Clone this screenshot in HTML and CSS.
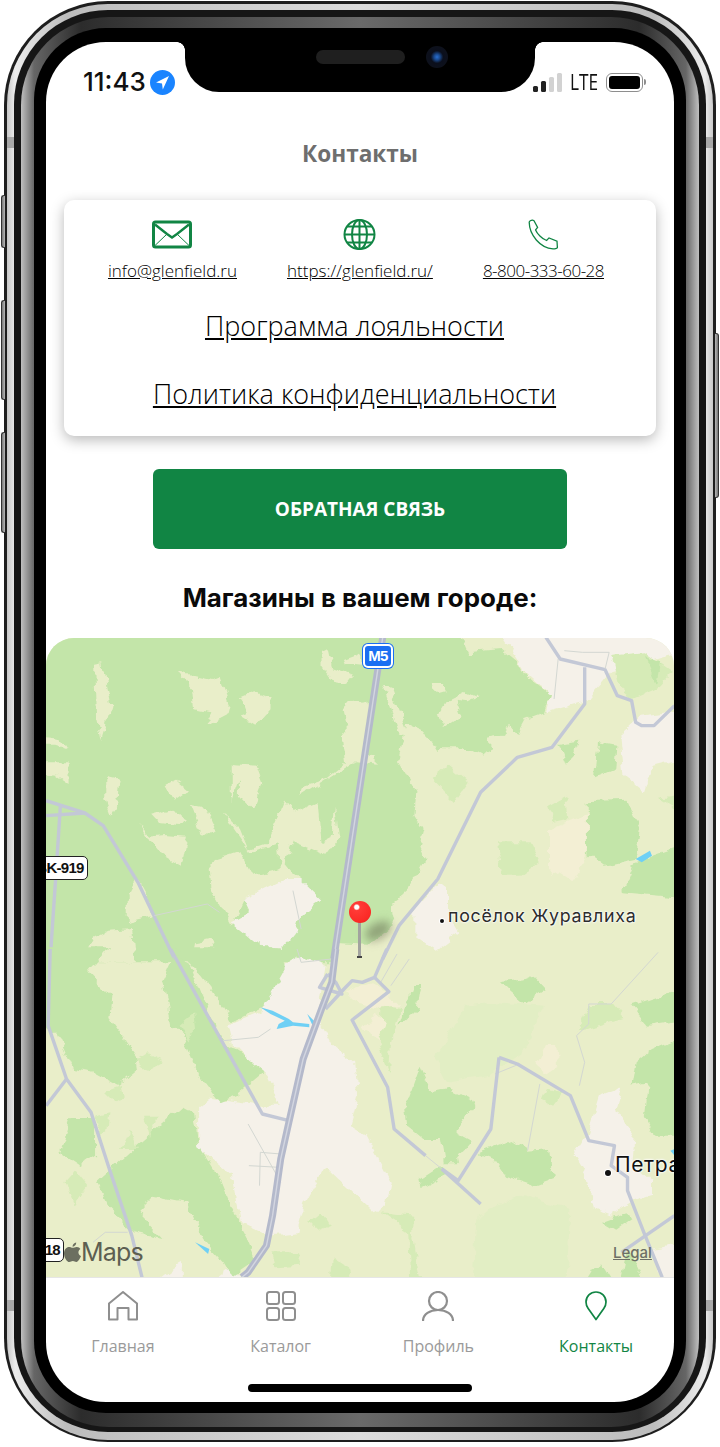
FILE: index.html
```html
<!DOCTYPE html>
<html lang="ru">
	<head>
		<meta charset="UTF-8" />
		<title>Контакты</title>
		<link rel="stylesheet" href="styles.css">
	</head>
	<body>
		<div class="device">
			<span class="side-btn side-btn-mute"></span>
			<span class="side-btn side-btn-up"></span>
			<span class="side-btn side-btn-down"></span>
			<span class="side-btn side-btn-power"></span>
			<span class="band band-lt"></span>
			<span class="band band-rt"></span>
			<span class="band band-lb"></span>
			<span class="band band-rb"></span>
			<div class="rim-edge"><div class="rim-silver"><div class="rim-dark"><div class="rim-steel"><div class="rim-black">
				<div class="screen">
					<div class="notch"><span class="speaker"></span><span class="camera"></span></div>

					<header class="status">
						<div class="status-left">
							<span class="clock">11:43</span>
							<svg class="loc" width="25" height="25" viewBox="0 0 25 25"><circle cx="12.5" cy="12.5" r="12.5" fill="#1a84ff"/><path d="M19 6 L6 12.6 L12 13.4 L12.8 19.4 Z" fill="#fff"/></svg>
						</div>
						<div class="status-right">
							<span class="signal"><i class="on s1"></i><i class="on s2"></i><i class="s3"></i><i class="s4"></i></span>
							<span class="lte">LTE</span>
							<span class="battery"><i></i></span>
						</div>
					</header>

					<h1 class="title">Контакты</h1>

					<section class="card">
						<div class="contacts">
							<a class="contact">
								<svg width="40" height="28" viewBox="0 0 40 28" fill="none" stroke="#118544"><rect x="1.5" y="1.5" width="37" height="25" rx="2" stroke-width="3"/><path d="M3 4 L15 13.5 L20 17 L25 13.5 L37 4" stroke-width="2.4"/><path d="M3 25 L15 13.5 M37 25 L25 13.5" stroke-width="1"/></svg>
								<span>info@glenfield.ru</span>
							</a>
							<a class="contact">
								<svg width="33" height="31" viewBox="0 0 33 31" fill="none" stroke="#118544" stroke-width="2"><ellipse cx="16.5" cy="15.5" rx="15" ry="14.5"/><ellipse cx="16.5" cy="15.5" rx="7.5" ry="14.5"/><path d="M16.5 1 V30 M1.5 15.5 H31.5 M4 7.5 H29 M4 23.5 H29"/></svg>
								<span>https://glenfield.ru/</span>
							</a>
							<a class="contact contact-phone">
								<svg width="30" height="30" viewBox="0 0 30 30" fill="none" stroke="#118544" stroke-width="1.3"><path d="M1.2 2.8 C1.2 1.6 3 .6 4.6 .7 L6 1.2 L9.6 8 L7.6 10.4 C9 14 14 19.4 18.6 21 L21 18.4 L29 21.6 L29.4 28 C29 29 26.4 29.6 25 29.4 C12 28.4 1.4 15.4 1.2 2.8 Z"/></svg>
								<span>8-800-333-60-28</span>
							</a>
						</div>
						<a class="big-link link-first">Программа лояльности</a>
						<a class="big-link link-second">Политика конфиденциальности</a>
					</section>

					<button class="feedback" type="button">ОБРАТНАЯ СВЯЗЬ</button>

					<h2 class="shops">Магазины в вашем городе:</h2>

					<div class="map">
						<svg class="map-art" width="628" height="639" viewBox="46 639 628 639">
							<defs>
								<filter id="rough" color-interpolation-filters="sRGB">
									<feTurbulence type="fractalNoise" baseFrequency=".03" numOctaves="3" seed="4" result="n"/>
									<feDisplacementMap in="SourceGraphic" in2="n" scale="26" xChannelSelector="R" yChannelSelector="G"/>
								</filter>
							</defs>
							<rect x="46" y="639" width="628" height="639" fill="#e9eec9"/>
							<g transform="translate(40 630) scale(.408 .3333)">
								<g filter="url(#rough)">
									<polygon class="urban" points="1120,0 1600,0 1600,60 1400,130 1340,215 1240,250 1250,195 1190,130"/>
									<polygon class="forest" points="-20,0 1025,0 1050,70 1130,60 1170,100 1200,150 1250,195 1235,250 1190,270 1170,315 1150,285 1135,320 1090,330 1115,360 1080,380 1040,355 985,355 975,370 945,310 900,285 880,400 925,490 920,560 940,600 930,650 945,690 900,790 860,830 870,880 800,950 730,945 720,1000 -20,1000"/>
									<g class="pale">
										<polygon points="135,105 155,100 165,170 175,230 150,330 140,270"/>
										<polygon points="340,130 420,150 440,140 465,230 460,255 405,290 420,250 380,240 375,180"/>
										<polygon points="490,205 520,190 565,205 565,240 530,290 490,260 515,250"/>
										<polygon points="690,70 705,60 715,115 750,130 770,140 755,165 715,155 690,110"/>
										<polygon points="745,90 790,70 790,110 750,105"/>
										<polygon points="840,170 860,180 905,320 880,320"/>
										<polygon points="955,165 985,165 995,190 980,195"/>
										<polygon points="1000,210 1040,185 1075,205 1050,220 1020,215 1035,260 985,300 975,260"/>
										<polygon points="745,225 800,215 810,300 800,375 825,380 825,410 770,400 640,500 650,470 700,450 750,400 740,300 755,290"/>
										<polygon points="470,405 530,410 545,460 520,540 490,500 490,450 470,520"/>
										<polygon points="160,440 195,450 190,510 200,520 175,560 160,510"/>
										<polygon points="310,470 335,455 365,485 330,515"/>
										<polygon points="-20,320 50,330 65,360 40,350 -20,350"/>
										<polygon points="-20,400 70,400 70,465 40,440 -20,430"/>
										<polygon points="275,560 320,545 355,570 345,585 290,580"/>
										<polygon points="370,530 410,540 430,595 400,620"/>
										<polygon points="245,585 270,620 310,615 360,620 345,710 290,670 270,640"/>
										<polygon points="450,550 490,600 510,660 560,640 600,520 620,550 680,520 690,640 720,620 725,530 735,620 700,680 620,640 600,700 620,730 640,750 500,810 470,890 420,780 415,700 490,670 520,740 590,720 585,640 515,670 470,590"/>
										<polygon points="130,930 170,905 225,900 235,1000 100,1000"/>
										<polygon points="380,940 420,930 440,1000 370,1000"/>
										<polygon points="215,790 235,745 260,800 280,860 215,880"/>
									</g>
									<polygon class="urban" points="500,810 600,750 640,750 690,810 640,860 630,900 590,960 540,950 470,880 515,850"/>
									<polygon class="urban" points="1420,320 1470,260 1600,240 1600,380 1500,410 1480,490 1430,440"/>
									<polygon class="urban" points="920,840 980,760 1000,780 1000,850 1030,910 970,965 920,920"/>
									<polygon class="meadow" points="1400,80 1480,70 1550,130 1520,170 1450,210 1420,180"/>
									<polygon class="forest" points="1480,80 1520,100 1510,165"/>
									<polygon class="forest" points="1340,520 1440,515 1470,600 1460,690 1385,710 1340,670"/>
									<polygon class="forest" points="1270,345 1320,335 1290,410"/>
									<polygon class="forest" points="1370,340 1415,350 1410,420 1360,445"/>
									<polygon class="forest" points="1460,700 1600,640 1600,810 1430,790"/>
									<polygon class="meadow" points="1120,640 1200,640 1225,700 1180,740 1130,740"/>
									<polygon class="meadow" points="960,450 1000,410 1050,460 1015,520"/>
									<polygon class="meadow" points="1245,530 1290,500 1295,570 1260,580"/>
									<polygon class="meadow" points="1520,510 1600,490 1600,570"/>
									<polygon class="sand" points="1250,600 1340,555 1340,690 1300,760 1250,720"/>
								</g>
								<polygon class="water" points="1460,690 1495,665 1500,680 1475,700"/>
								<polyline class="road" points="1240,25 1275,90 1385,122 1415,200 1450,215 1460,280 1475,290 1505,290 1555,230"/>
								<polyline class="road" points="840,990 880,890 975,750 1080,490 1170,385 1255,355 1335,225 1335,115"/>
								<polyline class="road" points="50,530 40,720 25,990"/>
								<polyline class="road" points="15,515 110,552 155,590 240,760 330,990"/>
								<polyline class="road" points="15,560 110,552"/>
								<polyline class="road-thin" points="1270,90 1260,210"/>
								<polyline class="road-thin" points="1285,65 1330,70 1395,70 1385,120"/>
								<polyline class="road-thin" points="280,860 410,825 440,850"/>
								<polyline class="road-thin" points="620,785 640,900"/>
								<polyline class="road-main" points="840,25 720,990"/>
								<polyline class="road-core" points="840,25 720,990"/>
							</g>
							<g transform="translate(40 950) scale(.408 .3333)">
								<g filter="url(#rough)">
									<g class="urban">
										<polygon points="460,230 540,190 590,60 640,20 700,50 680,200 720,290 770,340 780,440 760,530 800,560 860,700 850,770 820,790 760,720 700,650 650,760 630,850 560,860 490,820 470,680 390,600 390,480 420,450 540,470 590,470 560,380 500,320 470,280"/>
										<polygon points="1310,620 1340,560 1370,440 1425,415 1410,480 1455,560 1450,640 1500,700 1500,740 1450,760 1400,800 1360,780 1340,680"/>
										<polygon points="1495,900 1600,880 1600,1000 1530,1000"/>
										<polygon points="280,1000 350,935 350,1000"/>
										<polygon points="420,1000 470,955 490,1000"/>
									</g>
									<polygon class="meadow-soft" points="970,330 1040,170 1120,160 1235,170 1190,300 1100,380 1000,400"/>
									<polygon class="meadow-soft" points="1060,1000 1070,800 1180,740 1300,780 1290,1000"/>
									<g class="forest">
										<polygon points="-20,-5 170,-5 120,70 175,140 170,210 235,320 240,360 190,410 130,370 80,360 40,250 -20,200"/>
										<polygon points="330,-5 590,-5 600,60 550,170 470,220 420,120 395,80"/>
										<polygon points="300,100 330,20 370,50 395,130 420,200 450,280 500,320 550,370 480,440 440,460 390,380 370,320 350,260 320,230"/>
										<polygon points="140,700 230,600 350,470 380,490 390,590 440,690 470,780 510,870 530,930 470,980 450,940 400,870 360,760 280,740 240,790 300,870 230,850 170,780"/>
										<polygon points="1125,100 1190,90 1210,80 1240,120 1185,165 1150,130"/>
										<polygon points="895,470 930,350 960,430 1000,420 1070,460 1040,510 1015,550 1060,580 1020,640 990,640 980,570 940,570 900,530"/>
										<polygon points="930,690 980,650 1000,680 935,720"/>
										<polygon points="1070,610 1150,570 1195,605 1250,600 1260,690 1215,710 1140,680 1110,630"/>
										<polygon points="1450,170 1600,110 1600,210 1490,230"/>
										<polygon points="1460,340 1500,300 1600,250 1600,560 1510,560 1480,500 1490,400 1450,410"/>
										<polygon points="880,230 915,105 935,105 925,180"/>
										<polygon points="1375,820 1440,790 1450,810 1410,845"/>
										<polygon points="50,610 75,510 135,510 135,620 100,650"/>
										<polygon points="1420,1000 1440,900 1480,1000"/>
										<polygon points="1340,1000 1370,940 1400,1000"/>
									</g>
									<g class="meadow">
										<polygon points="835,170 885,180 860,290 855,370 830,290"/>
										<polygon points="1240,420 1285,430 1260,470 1230,450"/>
										<polygon points="1315,250 1345,165 1400,165 1430,210 1350,240"/>
										<polygon points="135,500 170,490 165,550 150,560"/>
										<polygon points="195,600 220,540 240,600"/>
										<polygon points="255,500 290,500 270,570"/>
										<polygon points="155,430 200,410 205,440 180,460"/>
										<polygon points="235,330 260,310 305,340 265,365"/>
										<polygon points="60,700 85,665 115,710 80,770"/>
										<polygon points="570,910 630,910 640,950 580,955"/>
										<polygon points="660,820 690,790 710,830 680,845"/>
										<polygon points="835,790 920,800 915,870 935,1000 910,1000 905,850"/>
										<polygon points="710,1000 715,925 760,960 770,1000"/>
										<polygon points="340,230 380,190 385,240 360,275"/>
									</g>
									<g class="sand">
										<polygon points="1215,350 1240,285 1265,285 1270,350 1240,375"/>
										<polygon points="790,240 820,195 850,220 830,270"/>
										<polygon points="750,130 810,105 850,130 880,170 830,180 780,165"/>
									</g>
								</g>
								<g class="water">
									<polygon points="540,175 570,185 610,210 620,220 660,225 660,235 620,230 580,240 585,225 600,215 565,195"/>
									<polygon points="655,195 675,220 670,235"/>
									<polygon points="380,880 415,900 412,915"/>
									<polygon points="1545,605 1555,600 1555,620"/>
								</g>
								<polyline class="road-thin" points="630,0 640,40 715,30"/>
								<polyline class="road-thin" points="450,275 535,265 565,240"/>
								<polyline class="road-thin" points="510,525 590,700"/>
								<polyline class="road-thin" points="512,650 585,655"/>
								<polyline class="road-thin" points="538,710 540,610 590,615"/>
								<polyline class="road-thin" points="875,15 835,100"/>
								<polyline class="road-thin" points="905,30 860,110"/>
								<polyline class="road-thin" points="1515,10 1400,165 1345,165 1345,225 1315,260 1335,340 1322,410"/>
								<polyline class="road-thin" points="1225,405 1195,605"/>
								<polyline class="road-thin" points="1115,375 1175,345"/>
								<polyline class="road-thin" points="945,620 985,660"/>
								<polyline class="road-thin" points="130,880 160,850 215,850"/>
								<polyline class="road" points="25,0 20,230 65,390 125,490 170,660 225,860 250,985"/>
								<polyline class="road" points="65,390 15,470"/>
								<polyline class="road" points="320,0 545,495 610,515"/>
								<polyline class="road" points="850,0 820,85 790,100 765,95 745,120 700,180"/>
								<polyline class="road" points="705,75 685,115 740,135 725,100 705,75"/>
								<polyline class="road" points="820,85 855,128 765,213 852,415 868,540 945,620"/>
								<polyline class="road" points="985,660 1080,765"/>
								<polyline class="road" points="1125,325 1105,540 1025,695 985,660"/>
								<polyline class="road" points="1125,325 1170,345 1300,440 1345,575 1408,590 1400,650 1440,685 1440,725 1480,850 1525,985"/>
								<polyline class="road" points="1425,910 1555,800"/>
								<polyline class="road-main" points="725,0 715,100 690,180 645,330 610,520 590,630 570,800 555,890 510,970 495,985"/>
								<polyline class="road-core" points="725,0 715,100 690,180 645,330 610,520 590,630 570,800 555,890 510,970 495,985"/>
							</g>
						</svg>

						<span class="shield shield-blue">M5</span>
						<span class="shield shield-road">BK-919</span>
						<span class="shield shield-small">18</span>

						<span class="place-dot dot-zh"></span>
						<span class="place place-zh">посёлок Журавлиха</span>
						<span class="place-dot dot-pe"></span>
						<span class="place place-pe">Петра</span>

						<div class="pin">
							<span class="pin-shadow"></span>
							<span class="pin-needle"></span>
							<span class="pin-head"></span>
						</div>

						<div class="maps-logo">
							<svg width="17" height="21" viewBox="0 0 17 21"><path d="M12.2 0.5 C12.4 2.6 10.6 4.8 8.6 4.7 C8.3 2.7 10.2 .7 12.2 .5 Z M8.8 5.8 C9.8 5.8 11.2 4.8 12.9 4.9 C14.4 5 15.7 5.7 16.4 6.9 C13.4 8.7 14 12.9 17 14.1 C16.2 16.3 14.3 20 12.4 20 C11 20 10.4 19.1 8.9 19.1 C7.3 19.1 6.7 20 5.3 20 C3 20 0 15.4 0 11.4 C0 7.4 2.6 5 5 5 C6.5 5 7.8 5.8 8.8 5.8 Z" fill="#6c6f60"/></svg>
							<span>Maps</span>
						</div>
						<a class="legal">Legal</a>
					</div>

					<nav class="tabs">
						<a class="tab">
							<svg width="30" height="30" viewBox="0 0 30 30" fill="none" stroke="#8f8f8f" stroke-width="2"><path d="M1 12.5 L15 1 L29 12.5 V28.6 H20.5 V17 H9.5 V28.6 H1 Z" stroke-linejoin="round"/></svg>
							<span>Главная</span>
						</a>
						<a class="tab">
							<svg width="30" height="30" viewBox="0 0 30 30" fill="none" stroke="#8f8f8f" stroke-width="2"><rect x="1" y="1" width="12" height="12" rx="2.5"/><rect x="17" y="1" width="12" height="12" rx="2.5"/><rect x="1" y="17" width="12" height="12" rx="2.5"/><rect x="17" y="17" width="12" height="12" rx="2.5"/></svg>
							<span>Каталог</span>
						</a>
						<a class="tab">
							<svg width="32" height="30" viewBox="0 0 32 30" fill="none" stroke="#8f8f8f" stroke-width="2.2"><circle cx="16" cy="10" r="9"/><path d="M1 30 C1 23 8 19 16 19 C24 19 31 23 31 30"/></svg>
							<span>Профиль</span>
						</a>
						<a class="tab tab-active">
							<svg width="22" height="30" viewBox="0 0 22 30" fill="none" stroke="#118544" stroke-width="1.7"><path d="M11 28.6 L3.2 17.6 C1.8 15.6 1 13.6 1 11 C1 5.2 5.4 1 11 1 C16.6 1 21 5.2 21 11 C21 13.6 20.2 15.6 18.8 17.6 Z" stroke-linejoin="round"/></svg>
							<span>Контакты</span>
						</a>
					</nav>

					<span class="home-bar"></span>
				</div>
			</div></div></div></div></div>
		</div>
	</body>
</html>
```

FILE: styles.css
```css
body{
	margin:0;
	background-color:#fff;
	font-family:"Open Sans",sans-serif;
}
a{
	color:inherit;
}

/* phone body */
.device{
	position:relative;
	box-sizing:border-box;
	width:720px;
	height:1447px;
	padding:1px 4px 0;
}
.rim-edge{
	background-color:#1e1e1e;
	border-radius:104px;
	padding:3px 3px 2px;
}
.rim-silver{
	background:linear-gradient(90deg,#c8c8c8,#ececec 8px,#bdbdbd 60px,#dcdcdc 50%,#bdbdbd calc(100% - 60px),#ececec calc(100% - 8px),#c8c8c8);
	border-radius:101px;
	padding:6px 7px 8px;
}
.rim-dark{
	background-color:#161616;
	border-radius:94px;
	padding:7px 7px 5px;
}
.rim-steel{
	background:linear-gradient(90deg,#c0c0c0 0,#666 13px,#2c2c2c 60px,#6a6a6a 50%,#2c2c2c calc(100% - 60px),#666 calc(100% - 13px),#c0c0c0 100%);
	border-radius:88px;
	padding:11px 13px 14px;
}
.rim-black{
	background-color:#000;
	border-radius:72px;
	padding:14px 12px 11px;
}
.side-btn{
	position:absolute;
	width:4px;
	background:linear-gradient(90deg,#777,#b8b8b8);
	border:1px solid #333;
	border-right:0;
	border-radius:3px 0 0 3px;
	box-sizing:border-box;
}
.side-btn-mute{left:1px;top:195px;height:53px;}
.side-btn-up{left:1px;top:300px;height:100px;}
.side-btn-down{left:1px;top:432px;height:101px;}
.side-btn-power{right:1px;top:333px;height:165px;transform:scaleX(-1);}
.band{
	position:absolute;
	width:7px;
	height:11px;
	background-color:#a8a8a8;
}
.band-lt{left:7px;top:137px;}
.band-rt{right:7px;top:137px;}
.band-lb{left:7px;top:1300px;}
.band-rb{right:7px;top:1300px;}

/* screen */
.screen{
	position:relative;
	width:628px;
	height:1360px;
	background-color:#fff;
	border-radius:60px;
	overflow:hidden;
	display:flex;
	flex-direction:column;
	align-items:center;
}
.notch{
	position:absolute;
	top:0;
	left:139px;
	width:350px;
	height:50px;
	background-color:#000;
	border-radius:0 0 34px 34px;
}
.notch::before,.notch::after{
	content:"";
	position:absolute;
	top:0;
	width:8px;
	height:8px;
	background:radial-gradient(circle at 0 100%,transparent 7.5px,#000 8px);
}
.notch::before{left:-8px;}
.notch::after{right:-8px;transform:scaleX(-1);}
.speaker{
	position:absolute;
	left:131px;
	top:8px;
	width:89px;
	height:14px;
	border-radius:7px;
	background-color:#1f1f1f;
}
.camera{
	position:absolute;
	left:241px;
	top:4px;
	width:22px;
	height:22px;
	border-radius:50%;
	background:radial-gradient(circle,#2a6fd0 0,#1a4a90 18%,#0b0f1c 40%,#10131c 100%);
}

/* status bar */
.status{
	box-sizing:border-box;
	width:100%;
	height:80px;
	flex:none;
	padding:0 31px 0 37px;
	display:flex;
	justify-content:space-between;
	align-items:center;
}
.status-left{
	display:flex;
	align-items:center;
	gap:4px;
}
.clock{
	font:500 26px/30px Inter,sans-serif;
	color:#111;
}
.status-right{
	display:flex;
	align-items:center;
}
.signal{
	display:flex;
	align-items:flex-end;
	gap:3px;
	height:19px;
}
.signal i{
	width:5px;
	border-radius:1.5px;
	background-color:#d2d2d2;
}
.signal .on{background-color:#222;}
.s1{height:6px;}
.s2{height:11px;}
.s3{height:15px;}
.s4{height:19px;}
.lte{
	margin-left:8px;
	width:28px;
	font:400 21px/24px "Open Sans",sans-serif;
	color:#111;
	transform:scaleX(.82);
	transform-origin:0 50%;
}
.battery{
	position:relative;
	box-sizing:border-box;
	margin-left:8px;
	width:37px;
	height:19px;
	padding:2px;
	border:1px solid #8e8e8e;
	border-radius:6px;
}
.battery i{
	display:block;
	height:100%;
	border-radius:3px;
	background-color:#000;
}
.battery::after{
	content:"";
	position:absolute;
	right:-4px;
	top:5px;
	width:2px;
	height:6px;
	border-radius:0 2px 2px 0;
	background-color:#8e8e8e;
}

.title{
	margin:17px 0 31px;
	font-size:22.6px;
	line-height:30px;
	font-weight:700;
	color:#6e6e6e;
}

/* contacts card */
.card{
	box-sizing:border-box;
	width:592px;
	height:236px;
	flex:none;
	padding-top:19px;
	background-color:#fff;
	border-radius:10px;
	box-shadow:0 4px 14px rgba(0,0,0,.28);
	display:flex;
	flex-direction:column;
	align-items:center;
	color:#000;
}
.contacts{
	display:flex;
	justify-content:center;
	gap:50px;
	padding-right:8px;
}
.contact{
	display:flex;
	flex-direction:column;
	align-items:center;
	font-size:17px;
	font-weight:300;
	line-height:20px;
	text-decoration:underline;
}
.contact svg{
	height:31px;
	margin-bottom:11px;
}
.contact-phone{
	letter-spacing:-.5px;
}
.big-link{
	font-size:27px;
	font-weight:300;
	line-height:32px;
	text-decoration:underline;
	margin-right:11px;
}
.link-first{margin-top:29px;}
.link-second{margin-top:36px;}

.feedback{
	width:414px;
	height:80px;
	flex:none;
	margin-top:33px;
	border:0;
	border-radius:6px;
	background-color:#118544;
	color:#fff;
	font:700 19px "Open Sans",sans-serif;
}
.shops{
	margin:33px 0 24px;
	font:700 25.9px/32px Inter,sans-serif;
	color:#0a0a0a;
}

/* map */
.map{
	position:relative;
	width:628px;
	height:639px;
	flex:none;
	border-radius:28px 28px 0 0;
	overflow:hidden;
}
.map-art{
	display:block;
}
.map-art polyline,.map-art polygon{
	vector-effect:non-scaling-stroke;
}
.forest,.forest polygon{fill:#c3e5a9;}
.meadow,.meadow polygon{fill:#d6ebb7;}
.meadow-soft{fill:#e2eec4;}
.pale polygon{fill:#e9eec9;}
.urban,.urban polygon{fill:#f5f1e9;}
.sand,.sand polygon{fill:#f3efd4;}
.water,.water polygon{fill:#6fd0f5;}
.road,.road-main,.road-core,.road-thin{
	fill:none;
	stroke-linejoin:round;
}
.road{stroke:#c3c8d6;stroke-width:3.4;}
.road-main{stroke:#b4b9cb;stroke-width:7;}
.road-core{stroke:#d3d6e0;stroke-width:1.4;}
.road-thin{stroke:#d3d7d2;stroke-width:1;}

.shield{
	position:absolute;
	box-sizing:border-box;
	font:700 15px/19px "Liberation Sans",sans-serif;
	text-align:center;
	border-radius:5px;
	background-color:#fff;
	border:1px solid #222;
	color:#111;
	letter-spacing:-.7px;
	white-space:nowrap;
}
.shield-blue{
	left:317px;
	top:6px;
	width:30px;
	height:24px;
	line-height:20px;
	background-color:#1b6ff2;
	border:2px solid #fff;
	box-shadow:0 0 0 1px #1b6ff2;
	color:#fff;
}
.shield-road{
	left:-14px;
	top:218px;
	width:56px;
	height:24px;
	line-height:22px;
}
.shield-small{
	left:-8px;
	top:600px;
	width:26px;
	height:24px;
	line-height:22px;
	text-align:right;
	padding-right:3px;
}
.place{
	position:absolute;
	font-family:Inter,sans-serif;
	color:#2c2c2c;
	text-shadow:0 0 2px #fff,0 0 2px #fff,0 0 3px #fff;
	white-space:nowrap;
}
.place-zh{
	left:402px;
	top:267px;
	font-size:17.8px;
	line-height:22px;
	letter-spacing:.75px;
}
.place-pe{
	left:569px;
	top:514px;
	font-size:21px;
	line-height:26px;
	letter-spacing:.6px;
	color:#111;
}
.place-dot{
	position:absolute;
	border-radius:50%;
	background-color:#111;
	box-shadow:0 0 0 1px #fff;
}
.dot-zh{left:394px;top:281px;width:4px;height:4px;}
.dot-pe{left:559px;top:532px;width:6px;height:6px;}

.pin{
	position:absolute;
	left:303px;
	top:263px;
	width:60px;
	height:60px;
}
.pin-head{
	position:absolute;
	left:0;
	top:0;
	width:22px;
	height:22px;
	border-radius:50%;
	background:radial-gradient(circle at 35% 28%,#fff 0,#fff 9%,#ff3b36 16%,#fb2a26 70%,#d91c1a 100%);
}
.pin-needle{
	position:absolute;
	left:9px;
	top:20px;
	width:3px;
	height:37px;
	background-color:#a2a39f;
}
.pin-needle::after{
	content:"";
	position:absolute;
	left:-1px;
	bottom:0;
	width:5px;
	height:2px;
	background-color:#444;
}
.pin-shadow{
	position:absolute;
	left:15px;
	top:22px;
	width:28px;
	height:16px;
	border-radius:50%;
	background-color:rgba(80,80,60,.45);
	filter:blur(5px);
	transform:rotate(-30deg);
}
.maps-logo{
	position:absolute;
	left:18px;
	top:599px;
	display:flex;
	align-items:center;
	gap:0;
	font:400 25px/30px Inter,sans-serif;
	letter-spacing:-.8px;
	color:#5d5f52;
}
.legal{
	position:absolute;
	left:567px;
	top:606px;
	font:500 15px/18px Inter,sans-serif;
	color:#6d6f66;
	text-decoration:underline;
}

/* bottom tabs */
.tabs{
	box-sizing:border-box;
	width:631px;
	margin-left:-1px;
	flex:1;
	display:grid;
	grid-template-columns:repeat(4,1fr);
	border-top:1px solid #e6e6e6;
	padding-top:13px;
}
.tab{
	display:flex;
	flex-direction:column;
	align-items:center;
	font-size:16px;
	line-height:20px;
	color:#9a9a9a;
}
.tab svg{
	height:30px;
	margin-bottom:15px;
}
.tab-active{
	color:#118544;
}
.home-bar{
	position:absolute;
	left:202px;
	bottom:10px;
	width:224px;
	height:8px;
	border-radius:4px;
	background-color:#000;
}
```
